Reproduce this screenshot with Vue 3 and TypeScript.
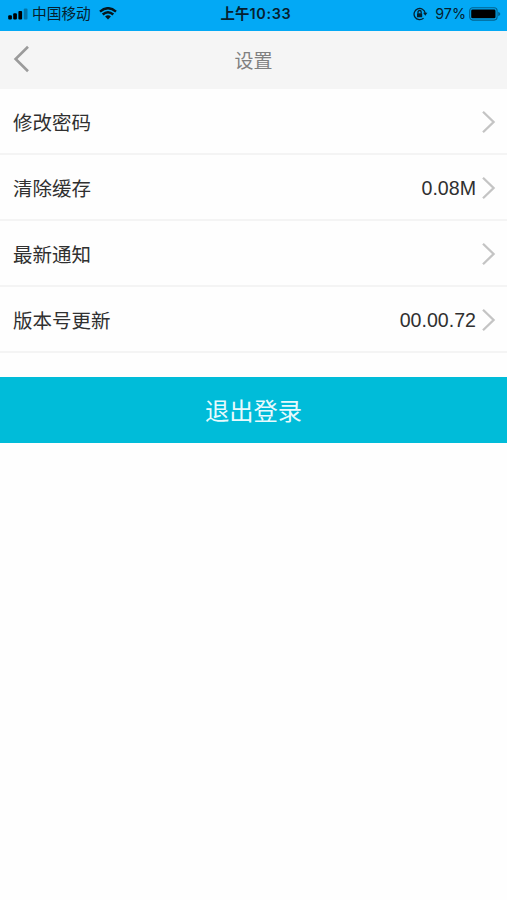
<script setup lang="ts">
interface SettingItem {
  label: string
  value?: string
}

const items: SettingItem[] = [
  { label: '修改密码' },
  { label: '清除缓存', value: '0.08M' },
  { label: '最新通知' },
  { label: '版本号更新', value: '00.00.72' },
]
</script>

<template>
  <div class="screen">
    <div class="status">
      <div class="side">
        <svg class="signal" width="20" height="12" viewBox="0 0 20 12">
          <rect x="0.2" y="7.2" width="3.7" height="4.2" rx="1" />
          <rect x="5.2" y="5.2" width="3.7" height="6.2" rx="1" />
          <rect x="10.4" y="3" width="3.7" height="8.4" rx="1" />
          <rect x="15.8" y="0.4" width="3.7" height="11" rx="1" opacity="0.3" />
        </svg>
        <span class="carrier">中国移动</span>
        <svg class="wifi" width="18" height="13" viewBox="0 0 18 13">
          <path d="M1 4.6 Q9 -2.2 17 4.6" />
          <path d="M3.7 7.5 Q9 3 14.3 7.5" />
          <path class="dot" d="M9 12.4 L6.1 9.5 Q9 7.2 11.9 9.5 Z" />
        </svg>
      </div>
      <div class="time">上午<span class="digits">10:33</span></div>
      <div class="side right">
        <svg class="lock" width="15" height="14" viewBox="0 0 15 14">
          <path d="M10.6 11.1 A5.6 5.6 0 1 1 12.2 6.1" />
          <path class="solid" d="M10.1 5.8 H14.4 L12.3 8.7 Z" />
          <rect class="solid" x="4" y="6.2" width="5.2" height="4" rx="0.5" />
          <path class="shackle" d="M5 6.5 V5.1 A1.6 1.6 0 0 1 8.2 5.1 V6.5" />
        </svg>
        <span class="percent">97%</span>
        <svg class="battery" width="32" height="14" viewBox="0 0 32 14">
          <rect x="0.7" y="0.7" width="27.4" height="12.4" rx="3" fill="none" stroke="#000" stroke-opacity="0.42" stroke-width="1.1" />
          <rect x="2.2" y="2.6" width="24.3" height="8.6" rx="1.3" />
          <path d="M29.2 4.7 Q31.3 5.4 31.3 7 Q31.3 8.6 29.2 9.3 Z" opacity="0.42" />
        </svg>
      </div>
    </div>

    <header class="header">
      <svg class="back" width="17" height="28" viewBox="0 0 17 28">
        <path d="M15 1.8 L2.6 14 L15 26.2" />
      </svg>
      <h1 class="title">设置</h1>
    </header>

    <ul class="list">
      <li v-for="item in items" :key="item.label" class="row">
        <span class="label">{{ item.label }}</span>
        <span v-if="item.value" class="value">{{ item.value }}</span>
        <svg class="chevron" width="14" height="24" viewBox="0 0 14 24">
          <path d="M1 1.7 L11.6 12 L1 22.3" />
        </svg>
      </li>
    </ul>

    <button class="logout" type="button">退出登录</button>
  </div>
</template>

<style>
body {
  background: #fefefe;
}
</style>

<style scoped>
.screen {
  min-height: 900px;
  font-family: 'Liberation Sans', 'Noto Sans CJK SC', sans-serif;
  color: #303030;
  background: #fefefe;
}

.status {
  display: grid;
  grid-template-columns: 1fr auto 1fr;
  align-items: center;
  box-sizing: border-box;
  height: 31px;
  padding: 0 6px 4px 8px;
  background: #03a9f5;
  color: #06202e;
}

.side {
  display: flex;
  align-items: center;
}

.right {
  justify-content: flex-end;
}

.carrier {
  margin-left: 4px;
  font-size: 14.7px;
  line-height: 20px;
}

.wifi {
  margin-left: 8px;
  fill: none;
  stroke: #06151d;
  stroke-width: 2.4;
}

.wifi .dot {
  fill: #06151d;
  stroke: none;
}

.time {
  padding-left: 3px;
  font-family: Inter, 'Noto Sans CJK SC', sans-serif;
  font-size: 14.4px;
  font-weight: 600;
  line-height: 20px;
}

.digits {
  letter-spacing: 0.7px;
}

.lock {
  fill: none;
  stroke: #06202e;
  stroke-width: 1.3;
}

.lock .solid {
  fill: #06202e;
  stroke: none;
}

.percent {
  margin: 0 3px 0 7px;
  font-family: Inter, sans-serif;
  font-size: 14.3px;
  line-height: 20px;
}

.header {
  display: grid;
  grid-template-columns: 1fr auto 1fr;
  align-items: center;
  height: 58px;
  padding: 0 12px;
  background: #f5f5f5;
}

.back {
  margin-bottom: 3px;
  margin-left: 1px;
  fill: none;
  stroke: #9b9b9b;
  stroke-width: 2.6;
}

.title {
  margin: 0;
  padding-top: 3px;
  font-size: 19px;
  font-weight: 400;
  line-height: 28px;
  color: #808080;
}

.list {
  margin: 0;
  padding: 0;
  list-style: none;
}

.row {
  display: flex;
  align-items: center;
  box-sizing: border-box;
  height: 66px;
  padding: 2px 11px 0 13px;
  border-bottom: 2px solid #f4f4f4;
}

.label {
  flex: 1;
  padding-top: 2px;
  font-size: 19.5px;
  line-height: 28px;
}

.value {
  margin-right: 6px;
  font-size: 19.6px;
  line-height: 28px;
}

.chevron {
  fill: none;
  stroke: #c4c4c4;
  stroke-width: 2.3;
}

.logout {
  display: block;
  width: 100%;
  height: 66px;
  margin-top: 24px;
  padding: 3px 0 0;
  border: 0;
  background: #00bcd9;
  color: #e8fafd;
  font-family: inherit;
  font-size: 24.3px;
  line-height: 63px;
  text-align: center;
}
</style>
